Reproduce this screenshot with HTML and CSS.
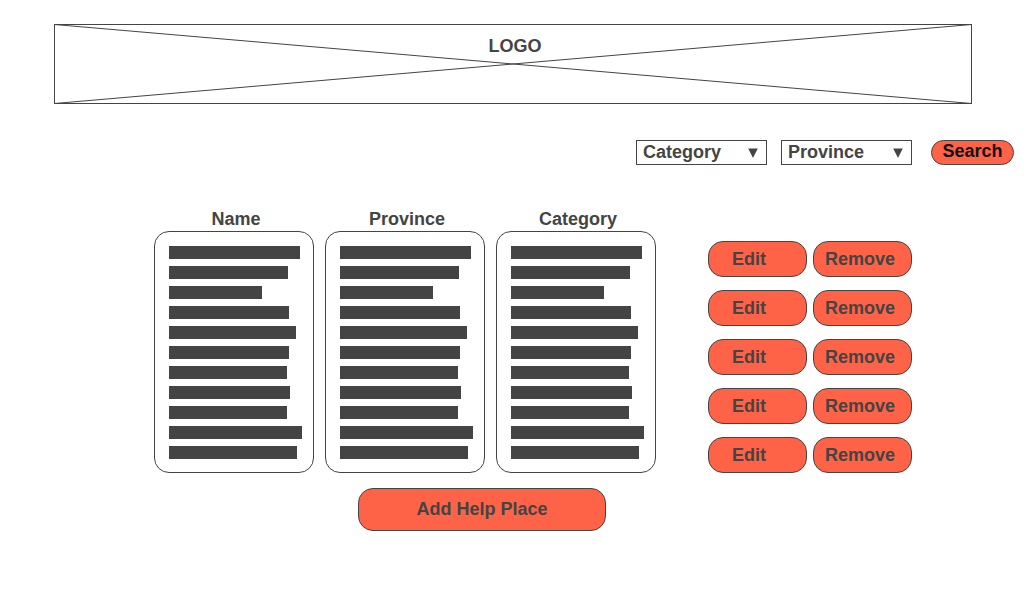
FILE: index.html
```html
<!DOCTYPE html>
<html lang="en">
<head>
<meta charset="utf-8">
<title>Help Places</title>
<link rel="stylesheet" href="styles.css">
</head>
<body>
<header class="banner">
  <svg class="banner-cross" viewBox="0 0 918 80" preserveAspectRatio="none" aria-hidden="true">
    <path d="M0.5 0.5L917.5 79.5M0.5 79.5L917.5 0.5"/>
  </svg>
  <span class="banner-title">LOGO</span>
</header>
<form class="filters">
  <div class="picker">
    <select class="picker-select" aria-label="Category"><option>Category</option></select>
    <svg class="picker-arrow" viewBox="0 0 10 10" aria-hidden="true"><path d="M0.2 0.5H9.8L5 10z"/></svg>
  </div>
  <div class="picker">
    <select class="picker-select" aria-label="Province"><option>Province</option></select>
    <svg class="picker-arrow" viewBox="0 0 10 10" aria-hidden="true"><path d="M0.2 0.5H9.8L5 10z"/></svg>
  </div>
  <button class="search" type="button">Search</button>
</form>
<main class="content">
  <div class="listing">
    <section class="column">
      <h2 class="column-title">Name</h2>
      <div class="card">
        <div class="bar w131"></div><div class="bar w119"></div><div class="bar w93"></div><div class="bar w120"></div><div class="bar w127"></div><div class="bar w120"></div><div class="bar w118"></div><div class="bar w121"></div><div class="bar w118"></div><div class="bar w133"></div><div class="bar w128"></div>
      </div>
    </section>
    <section class="column">
      <h2 class="column-title">Province</h2>
      <div class="card">
        <div class="bar w131"></div><div class="bar w119"></div><div class="bar w93"></div><div class="bar w120"></div><div class="bar w127"></div><div class="bar w120"></div><div class="bar w118"></div><div class="bar w121"></div><div class="bar w118"></div><div class="bar w133"></div><div class="bar w128"></div>
      </div>
    </section>
    <section class="column">
      <h2 class="column-title">Category</h2>
      <div class="card">
        <div class="bar w131"></div><div class="bar w119"></div><div class="bar w93"></div><div class="bar w120"></div><div class="bar w127"></div><div class="bar w120"></div><div class="bar w118"></div><div class="bar w121"></div><div class="bar w118"></div><div class="bar w133"></div><div class="bar w128"></div>
      </div>
    </section>
    <div class="actions">
      <button class="action edit" type="button">Edit</button><button class="action remove" type="button">Remove</button>
      <button class="action edit" type="button">Edit</button><button class="action remove" type="button">Remove</button>
      <button class="action edit" type="button">Edit</button><button class="action remove" type="button">Remove</button>
      <button class="action edit" type="button">Edit</button><button class="action remove" type="button">Remove</button>
      <button class="action edit" type="button">Edit</button><button class="action remove" type="button">Remove</button>
    </div>
  </div>
  <button class="add" type="button">Add Help Place</button>
</main>
</body>
</html>
```
FILE: styles.css
```css
* { box-sizing: border-box; }

body {
  margin: 0;
  background: #fff;
  color: #444;
  font: bold 18px/20px "Liberation Sans", Arial, sans-serif;
}

button, select {
  margin: 0;
  color: inherit;
  font: inherit;
}

.banner {
  position: relative;
  height: 80px;
  margin: 24px 63px 0 54px;
  padding: 11px 0 0 4px;
  border: 1px solid #444;
  text-align: center;
}

.banner-cross {
  position: absolute;
  inset: -1px;
  width: calc(100% + 2px);
  height: calc(100% + 2px);
  fill: none;
  stroke: #444;
  stroke-width: 1;
}

.filters {
  display: flex;
  justify-content: flex-end;
  gap: 14px;
  margin: 36px 21px 0;
}

.picker {
  position: relative;
  width: 131px;
}

.picker-select {
  display: block;
  width: 100%;
  height: 25px;
  padding: 0 24px 2px 6px;
  border: 1px solid #444;
  border-radius: 0;
  background: #fff;
  appearance: none;
}

.picker-arrow {
  position: absolute;
  top: 8px;
  right: 9px;
  width: 10px;
  height: 10px;
  fill: #444;
  pointer-events: none;
}

.search {
  width: 83px;
  height: 25px;
  margin-left: 5px;
  padding: 0 0 4px;
  border: 1px solid #444;
  border-radius: 13px;
  background: #ff6347;
  color: #111;
}

.content { padding: 44px 123px 0 154px; }

.listing {
  display: flex;
  gap: 11px;
}

.column { flex: 1; }

.column-title {
  margin: 0 0 2px;
  padding-left: 4px;
  font-size: 18px;
  line-height: 20px;
  text-align: center;
}

.card {
  display: grid;
  gap: 7px;
  padding: 14px 11px 13px 14px;
  border: 1px solid #444;
  border-radius: 15px;
}

.bar {
  height: 13px;
  background: #444;
}

.w93 { width: 93px; }
.w118 { width: 118px; }
.w119 { width: 119px; }
.w120 { width: 120px; }
.w121 { width: 121px; }
.w127 { width: 127px; }
.w128 { width: 128px; }
.w131 { width: 131px; }
.w133 { width: 133px; }

.actions {
  display: grid;
  grid-template-columns: 99px 99px;
  gap: 13px 6px;
  align-content: start;
  margin-left: 41px;
  padding-top: 32px;
}

.action {
  height: 36px;
  border: 1px solid #444;
  border-radius: 15px;
  background: #ff6347;
  text-align: left;
}

.edit { padding: 0 0 0 23px; }
.remove { padding: 0 0 0 11px; }

.add {
  display: block;
  width: 248px;
  height: 43px;
  margin: 15px 0 0 204px;
  padding: 0 0 2px;
  border: 1px solid #444;
  border-radius: 15px;
  background: #ff6347;
}
```
